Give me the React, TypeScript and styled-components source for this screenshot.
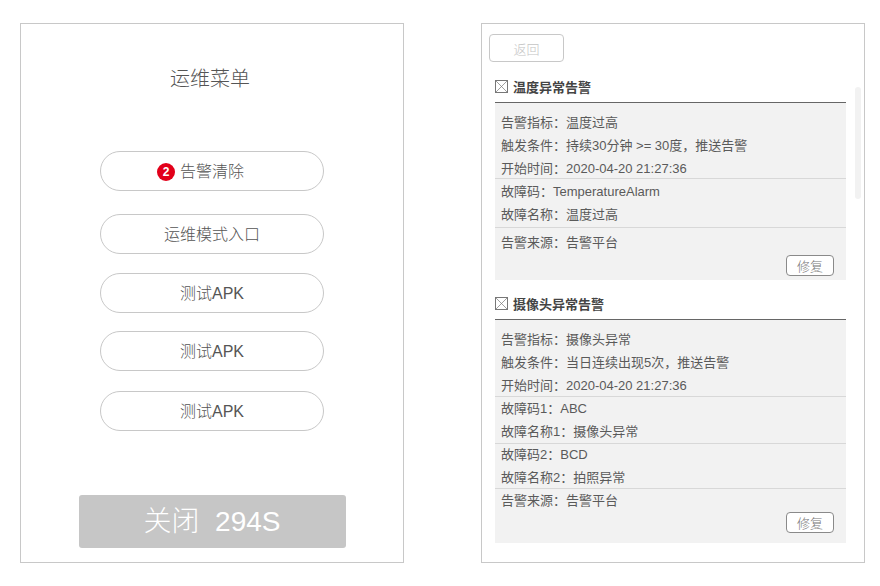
import styled, { createGlobalStyle } from 'styled-components';

const GlobalStyle = createGlobalStyle`
  html, body {
    margin: 0;
    padding: 0;
    background: #fff;
  }
  body {
    font-family: "Liberation Sans", "Noto Sans CJK SC", sans-serif;
    font-weight: 300;
    color: #555;
  }
  * {
    box-sizing: border-box;
  }
`;

const Page = styled.div`
  display: flex;
  gap: 77px;
  width: 880px;
  height: 586px;
  padding: 23px 0 0 20px;
`;

const Panel = styled.div`
  position: relative;
  width: 384px;
  height: 540px;
  border: 1px solid #c8c8c8;
`;

const MenuPanel = styled(Panel)`
  display: flex;
  flex-direction: column;
  align-items: center;
`;

const Title = styled.h1`
  height: 28px;
  margin: 41px 4px 58px 0;
  font-size: 20px;
  line-height: 28px;
  font-weight: 300;
  color: #555;
`;

const MenuButton = styled.button<{ $gap: number }>`
  position: relative;
  display: flex;
  align-items: center;
  justify-content: center;
  width: 224px;
  height: 40px;
  margin-bottom: ${(p) => p.$gap}px;
  padding: 0 0 2px;
  border: 1px solid #c8c8c8;
  border-radius: 20px;
  background: #fff;
  font-family: inherit;
  font-size: 16px;
  font-weight: 300;
  color: #555;
`;

const Badge = styled.span`
  position: absolute;
  top: 11px;
  left: 56px;
  display: flex;
  align-items: center;
  justify-content: center;
  width: 18px;
  height: 18px;
  border-radius: 50%;
  background: #e2001a;
  font-size: 12px;
  font-weight: 700;
  color: #fff;
`;

const CloseButton = styled.button`
  width: 267px;
  height: 53px;
  margin-top: 64px;
  padding: 0 0 6px;
  border: 0;
  border-radius: 3px;
  background: #c6c6c6;
  font-family: inherit;
  font-size: 28px;
  font-weight: 300;
  color: #fff;
  white-space: pre;
`;

const AlarmPanel = styled(Panel)`
  padding: 10px 18px 0 13px;
`;

const BackButton = styled.button`
  display: block;
  width: 75px;
  height: 28px;
  margin-left: -6px;
  padding: 0;
  border: 1px solid #c8c8c8;
  border-radius: 4px;
  background: #fff;
  font-family: inherit;
  font-size: 13px;
  font-weight: 300;
  color: #c4c4c4;
`;

const ScrollThumb = styled.div`
  position: absolute;
  top: 63px;
  right: 3px;
  width: 6px;
  height: 112px;
  border-radius: 3px;
  background: #f2f2f2;
`;

const Section = styled.section`
  width: 351px;
`;

const SectionHead = styled.div<{ $top: number }>`
  display: flex;
  align-items: center;
  gap: 5px;
  height: 27px;
  margin-top: ${(p) => p.$top}px;
  padding-bottom: 6px;
  border-bottom: 1px solid #666;
  font-size: 13px;
  font-weight: 700;
  color: #444;
`;

const SectionBody = styled.div<{ $height: number }>`
  display: flex;
  flex-direction: column;
  height: ${(p) => p.$height}px;
  background: #f2f2f2;
`;

const Group = styled.div<{ $top: number; $height: number; $last?: boolean }>`
  height: ${(p) => p.$height}px;
  padding-left: 6px;
  border-bottom: ${(p) => (p.$last ? '0' : '1px solid #d8d8d8')};
  & > :first-child {
    margin-top: ${(p) => p.$top}px;
  }
`;

const Row = styled.div`
  height: 23px;
  font-size: 13px;
  font-weight: 400;
  line-height: 23px;
  color: #5a5a5a;
  white-space: pre;
`;

const RepairButton = styled.button`
  display: block;
  width: 48px;
  height: 21px;
  margin: 0 12px 0 auto;
  padding: 0;
  border: 1px solid #8a8a8a;
  border-radius: 4px;
  background: #fff;
  font-family: inherit;
  font-size: 13px;
  font-weight: 300;
  color: #777;
`;

const BoxIcon = () => (
  <svg width="13" height="13" viewBox="0 0 13 13" fill="none" stroke="#777" strokeWidth="1">
    <rect x="0.5" y="0.5" width="12" height="12" />
    <path d="M1 1l11 11M12 1L1 12" strokeWidth="0.7" />
  </svg>
);

type GroupData = { top: number; height: number; rows: string[] };

const tempGroups: GroupData[] = [
  { top: 8, height: 76, rows: ['告警指标：温度过高', '触发条件：持续30分钟 >= 30度，推送告警', '开始时间：2020-04-20 21:27:36'] },
  { top: 1, height: 49, rows: ['故障码：TemperatureAlarm', '故障名称：温度过高'] },
  { top: 3, height: 27, rows: ['告警来源：告警平台'] },
];

const cameraGroups: GroupData[] = [
  { top: 8, height: 77, rows: ['告警指标：摄像头异常', '触发条件：当日连续出现5次，推送告警', '开始时间：2020-04-20 21:27:36'] },
  { top: 0, height: 47, rows: ['故障码1：ABC', '故障名称1：摄像头异常'] },
  { top: -1, height: 45, rows: ['故障码2：BCD', '故障名称2：拍照异常'] },
  { top: 0, height: 23, rows: ['告警来源：告警平台'] },
];

const menuItems = [
  { label: '运维模式入口', gap: 19 },
  { label: '测试APK', gap: 18 },
  { label: '测试APK', gap: 20 },
  { label: '测试APK', gap: 0 },
];

const Alarm = ({ title, top, height, groups }: { title: string; top: number; height: number; groups: GroupData[] }) => (
  <Section>
    <SectionHead $top={top}>
      <BoxIcon />
      {title}
    </SectionHead>
    <SectionBody $height={height}>
      {groups.map((g, i) => (
        <Group key={i} $top={g.top} $height={g.height} $last={i === groups.length - 1}>
          {g.rows.map((r) => (
            <Row key={r}>{r}</Row>
          ))}
        </Group>
      ))}
      <RepairButton>修复</RepairButton>
    </SectionBody>
  </Section>
);

export default function App() {
  return (
    <Page>
      <GlobalStyle />
      <MenuPanel>
        <Title>运维菜单</Title>
        <MenuButton $gap={23}>
          <Badge>2</Badge>
          告警清除
        </MenuButton>
        {menuItems.map((m, i) => (
          <MenuButton key={i} $gap={m.gap}>
            {m.label}
          </MenuButton>
        ))}
        <CloseButton>关闭  294S</CloseButton>
      </MenuPanel>
      <AlarmPanel>
        <BackButton>返回</BackButton>
        <ScrollThumb />
        <Alarm title="温度异常告警" top={14} height={177} groups={tempGroups} />
        <Alarm title="摄像头异常告警" top={13} height={223} groups={cameraGroups} />
      </AlarmPanel>
    </Page>
  );
}
